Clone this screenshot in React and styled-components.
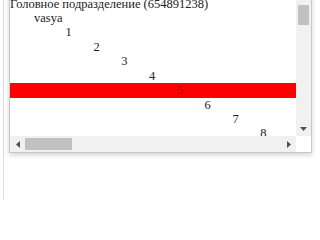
import React from 'react';
import styled, { createGlobalStyle } from 'styled-components';

const GlobalStyle = createGlobalStyle`
  html, body {
    margin: 0;
    padding: 0;
    background: #fff;
  }
`;

const SERIF = '"Liberation Serif", "Times New Roman", serif';

const Page = styled.div`
  margin-left: 3px;
  border-left: 1px solid #dcdcdc;
  padding-left: 5px;
  height: 200px;
  overflow: hidden;
`;

const ListBox = styled.div`
  margin-top: -11px;
  width: 303px;
  height: 164px;
  box-sizing: border-box;
  border: 1px solid #c8c8c8;
  box-shadow: 0 2px 5px rgba(0, 0, 0, 0.18);
  background: #fff;
  display: grid;
  grid-template-columns: 1fr 15px;
  grid-template-rows: 1fr 16px;
`;

const Viewport = styled.div`
  overflow: hidden;
  min-width: 0;
  min-height: 0;
`;

const Tree = styled.div`
  width: max-content;
  min-width: 100%;
  padding: 6.5px 0 4px;
`;

const Row = styled.div`
  height: 14.44px;
  line-height: 14.44px;
  font-family: ${SERIF};
  font-size: 12.5px;
  white-space: nowrap;
  padding-left: ${(p) => p.$indent}px;
  padding-right: 8px;
  color: ${(p) => (p.$selected ? '#a00000' : '#222')};
  background: ${(p) => (p.$selected ? '#ff0000' : 'transparent')};
`;

const ScrollBar = styled.div`
  background: #f1f1f1;
  display: flex;
  flex-direction: ${(p) => (p.$vertical ? 'column' : 'row')};
  min-width: 0;
  min-height: 0;
`;

const ArrowButton = styled.div`
  flex: 0 0 15px;
  display: flex;
  align-items: center;
  justify-content: center;
  color: #505050;
`;

const Track = styled.div`
  flex: 1;
  display: flex;
  flex-direction: ${(p) => (p.$vertical ? 'column' : 'row')};
  padding: ${(p) => (p.$vertical ? '0 2px' : '2px 0')};
`;

const Thumb = styled.div`
  background: #c1c1c1;
  flex: 0 0 ${(p) => p.$size}px;
`;

const Corner = styled.div`
  background: #fff;
`;

const Arrow = ({ dir }) => {
  const points = {
    up: '1,5 4.5,1 8,5',
    down: '1,1 4.5,5 8,1',
    left: '5,1 1,4.5 5,8',
    right: '1,1 5,4.5 1,8',
  }[dir];
  const vertical = dir === 'up' || dir === 'down';
  return (
    <svg width={vertical ? 9 : 6} height={vertical ? 6 : 9} viewBox={vertical ? '0 0 9 6' : '0 0 6 9'}>
      <polygon points={points} fill="currentColor" />
    </svg>
  );
};

const STEP = 27.8;

const App = () => {
  // head unit, then the user, then nested numbered levels
  const items = [
    { label: 'Головное подразделение (654891238)', indent: 0 },
    { label: 'vasya', indent: 24 },
  ];
  for (let i = 1; i <= 53; i++) {
    items.push({ label: String(i), indent: (i + 1) * STEP });
  }

  return (
    <>
      <GlobalStyle />
      <Page>
        <ListBox>
          <Viewport>
            <Tree>
              {items.map((item) => (
                <Row
                  key={item.label}
                  $indent={item.indent}
                  $selected={item.label === '5'}
                >
                  {item.label}
                </Row>
              ))}
            </Tree>
          </Viewport>
          <ScrollBar $vertical>
            <ArrowButton><Arrow dir="up" /></ArrowButton>
            <Track $vertical>
              <Thumb $size={20} />
            </Track>
            <ArrowButton><Arrow dir="down" /></ArrowButton>
          </ScrollBar>
          <ScrollBar>
            <ArrowButton><Arrow dir="left" /></ArrowButton>
            <Track>
              <Thumb $size={47} />
            </Track>
            <ArrowButton><Arrow dir="right" /></ArrowButton>
          </ScrollBar>
          <Corner />
        </ListBox>
      </Page>
    </>
  );
};

export default App;
